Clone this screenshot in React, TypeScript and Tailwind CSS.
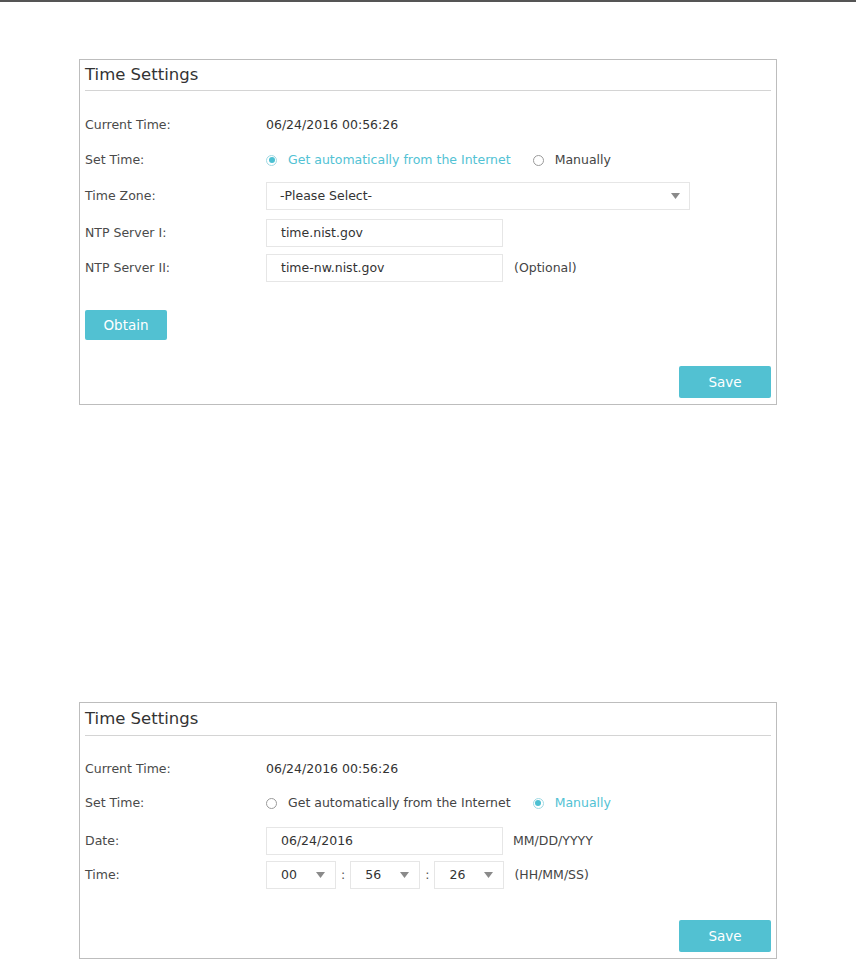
import React from "react";

const font = { fontFamily: '"DejaVu Sans", Verdana, sans-serif' };

function Radio({ checked, label, className = "" }: { checked: boolean; label: string; className?: string }) {
  return (
    <div className={"flex items-center " + className}>
      <span
        className={
          "flex h-[11px] w-[11px] items-center justify-center rounded-full border " +
          (checked ? "border-[#9fd9e3]" : "border-[#9a9a9a]")
        }
      >
        {checked && <span className="h-[6px] w-[6px] rounded-full bg-[#4cc0d2]" />}
      </span>
      <span className={"ml-[11px] " + (checked ? "text-[#52c2d4]" : "text-[#444]")}>{label}</span>
    </div>
  );
}

function Arrow() {
  return (
    <svg width="9" height="6" viewBox="0 0 9 6" className="shrink-0">
      <polygon points="0,0 9,0 4.5,6" fill="#8a8a8a" />
    </svg>
  );
}

function Row({ label, children, className = "" }: { label: string; children: React.ReactNode; className?: string }) {
  return (
    <div className={"flex h-[28px] items-center " + className}>
      <div className="w-[181px] shrink-0 text-[#4a4a4a]">{label}</div>
      <div className="flex items-center">{children}</div>
    </div>
  );
}

function Input({ value, w }: { value: string; w: string }) {
  return (
    <div className={"flex h-[28px] items-center border border-[#e6e6e6] px-[14px] text-[#333] " + w}>{value}</div>
  );
}

function TimeSelect({ value }: { value: string }) {
  return (
    <div className="flex h-[28px] w-[70px] items-center justify-between border border-[#e6e6e6] pl-[14px] pr-[10px] text-[#333]">
      <span>{value}</span>
      <Arrow />
    </div>
  );
}

function Btn({ label, w, h }: { label: string; w: string; h: string }) {
  return (
    <div className={"flex items-center justify-center rounded-[2px] bg-[#52c1d2] text-[13.5px] text-white " + w + " " + h}>
      {label}
    </div>
  );
}

export default function App() {
  return (
    <div className="min-h-[960px] bg-white text-[12.5px]" style={font}>
      <div className="h-[2px] bg-[#555]" />
      <div className="ml-[79px] mt-[57px] w-[698px] border border-[#bdbdbd] px-[5px] pb-[6px]">
        <div className="flex h-[31px] items-center border-b border-[#d4d4d4] text-[16.5px] text-[#333]">Time Settings</div>
        <Row label="Current Time:" className="mt-[20px]">
          <span className="text-[#333]">06/24/2016 00:56:26</span>
        </Row>
        <Row label="Set Time:" className="mt-[7px]">
          <Radio checked label="Get automatically from the Internet" />
          <Radio checked={false} label="Manually" className="ml-[22px]" />
        </Row>
        <Row label="Time Zone:" className="mt-[8px]">
          <div className="flex h-[28px] w-[424px] items-center justify-between border border-[#e6e6e6] pl-[13px] pr-[9px] text-[#333]">
            <span>-Please Select-</span>
            <Arrow />
          </div>
        </Row>
        <Row label="NTP Server I:" className="mt-[9px]">
          <Input value="time.nist.gov" w="w-[237px]" />
        </Row>
        <Row label="NTP Server II:" className="mt-[7px]">
          <Input value="time-nw.nist.gov" w="w-[237px]" />
          <span className="ml-[11px] text-[#444]">(Optional)</span>
        </Row>
        <div className="mt-[28px]">
          <Btn label="Obtain" w="w-[82px]" h="h-[30px]" />
        </div>
        <div className="mt-[26px] flex justify-end">
          <Btn label="Save" w="w-[92px]" h="h-[32px]" />
        </div>
      </div>

      <div className="ml-[79px] mt-[297px] w-[698px] border border-[#bdbdbd] px-[5px] pb-[6px]">
        <div className="flex h-[33px] items-center border-b border-[#d4d4d4] text-[16.5px] text-[#333]">Time Settings</div>
        <Row label="Current Time:" className="mt-[19px]">
          <span className="text-[#333]">06/24/2016 00:56:26</span>
        </Row>
        <Row label="Set Time:" className="mt-[6px]">
          <Radio checked={false} label="Get automatically from the Internet" />
          <Radio checked label="Manually" className="ml-[22px]" />
        </Row>
        <Row label="Date:" className="mt-[10px]">
          <Input value="06/24/2016" w="w-[237px]" />
          <span className="ml-[10px] text-[#444]">MM/DD/YYYY</span>
        </Row>
        <Row label="Time:" className="mt-[6px]">
          <TimeSelect value="00" />
          <span className="mx-[5px] text-[#555]">:</span>
          <TimeSelect value="56" />
          <span className="mx-[5px] text-[#555]">:</span>
          <TimeSelect value="26" />
          <span className="ml-[10px] text-[#444]">(HH/MM/SS)</span>
        </Row>
        <div className="mt-[31px] flex justify-end">
          <Btn label="Save" w="w-[92px]" h="h-[32px]" />
        </div>
      </div>
    </div>
  );
}
